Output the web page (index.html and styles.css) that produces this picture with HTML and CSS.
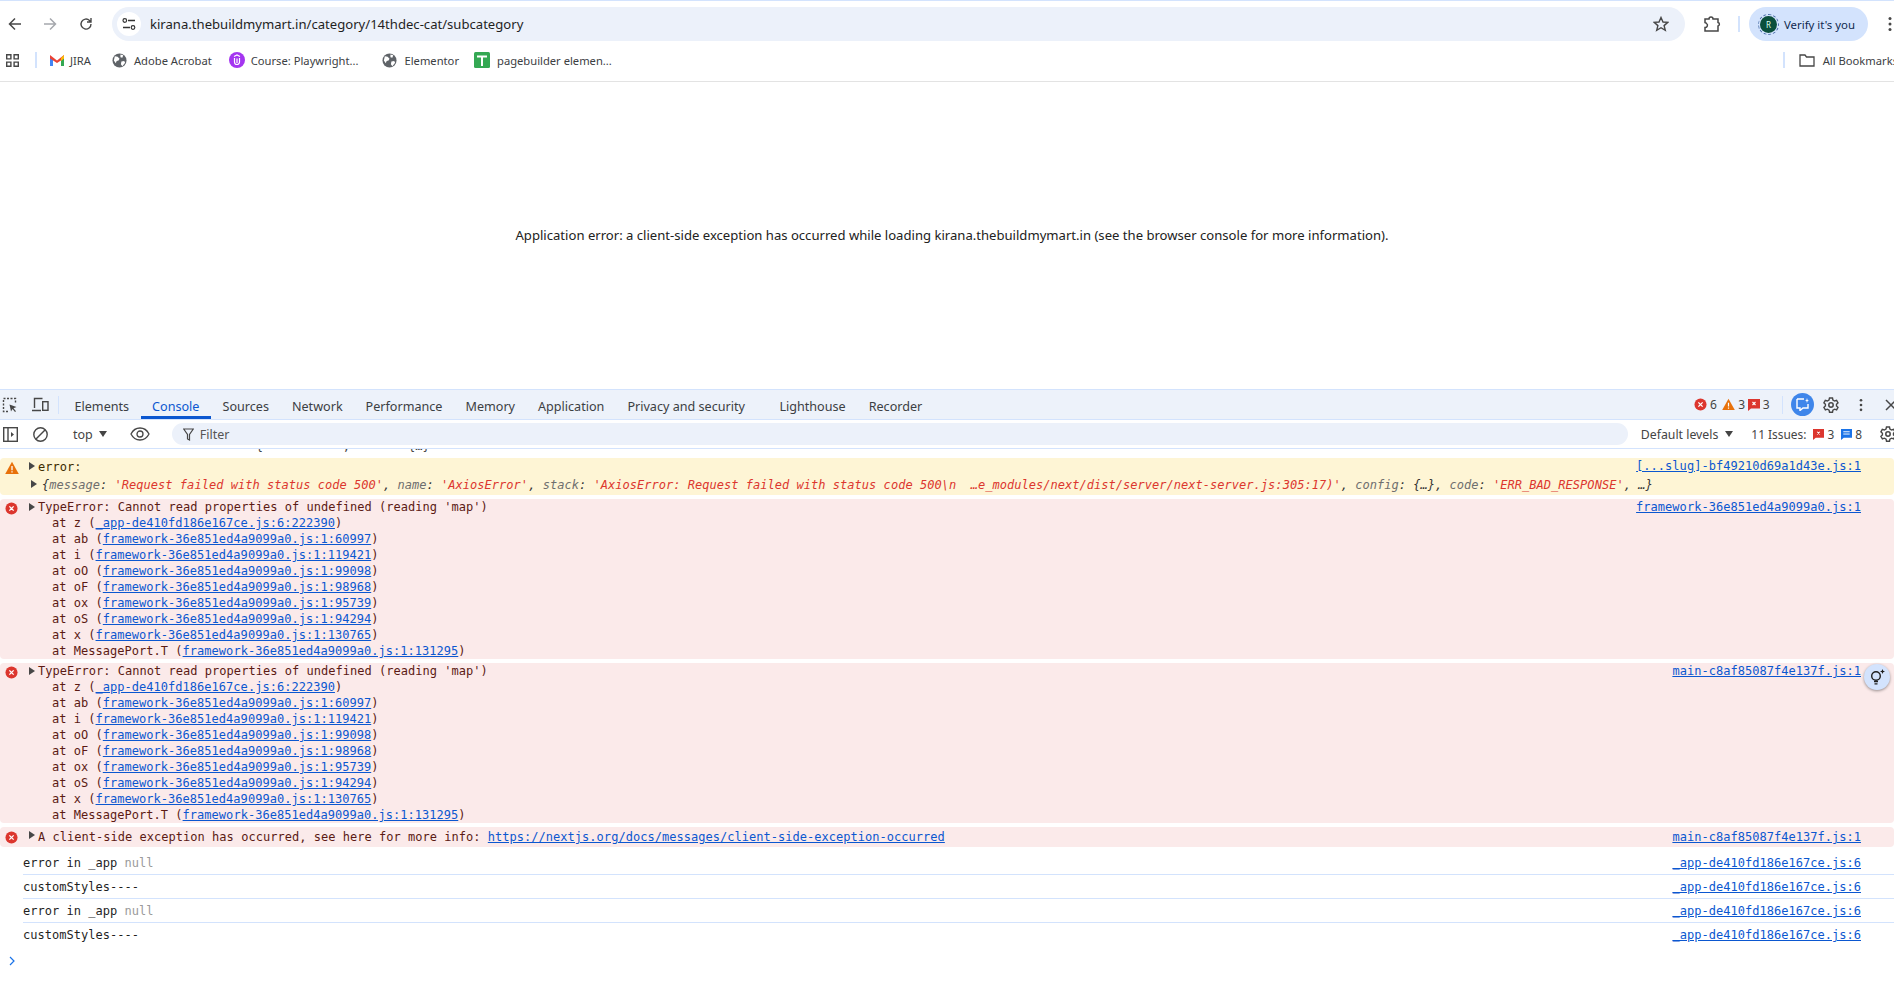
FILE: index.html
```html
<!DOCTYPE html>
<html lang="en">
<head>
    <meta charset="UTF-8">
    <meta name="viewport" content="width=device-width, initial-scale=1.0">
    <title>Application error</title>
    <link rel="stylesheet" href="styles.css">
</head>
<body>
    <svg class="defs" width="0" height="0">
        <symbol id="globe" viewBox="0 0 16 16">
            <circle cx="8" cy="8" r="7.5" fill="#5f6368"/>
            <path d="M3 3.5l3 .5 2 2-1 2-2 .5-1 2.5-2-3zM9 1.5l3 1-1 2.500-2-.5zM10 9l3-.5 1 2-3 3.500-1.500-2z" fill="#fff"/>
        </symbol>
        <symbol id="err" viewBox="0 0 14 14">
            <circle cx="7" cy="7" r="6.500" fill="#dc362e"/>
            <path d="M4.700 4.700l4.600 4.600M9.300 4.700l-4.600 4.600" stroke="#fff" stroke-width="1.400" fill="none"/>
        </symbol>
        <symbol id="warn" viewBox="0 0 14 14">
            <path d="M7 .8L13.800 13H.2z" fill="#e8710a"/>
            <path d="M7 5v4.200M7 10.200v1.300" stroke="#fff" stroke-width="1.300" fill="none"/>
        </symbol>
        <symbol id="issue" viewBox="0 0 12 12">
            <path d="M0 0h12v9.500H3L0 12z" fill="#dc362e"/>
            <path d="M4.500 3l3 3M7.500 3l-3 3" stroke="#fff" stroke-width="1.100" fill="none"/>
        </symbol>
        <symbol id="gear" viewBox="0 0 16 16">
            <circle cx="8" cy="8" r="2.200" fill="none" stroke="#474747" stroke-width="1.500"/>
            <path d="M6.500 1h3l.4 2 1.700 1 2-.7 1.400 2.600-1.500 1.300v1.800l1.500 1.300-1.400 2.600-2-.7-1.700 1-.4 2h-3l-.4-2-1.700-1-2 .7L.9 10.300l1.500-1.300V7.200L.9 5.900l1.400-2.600 2 .7 1.700-1z" fill="none" stroke="#474747" stroke-width="1.400"/>
        </symbol>
        <symbol id="kebab" viewBox="0 0 4 16">
            <circle cx="2" cy="2.500" r="1.500" fill="#474747"/>
            <circle cx="2" cy="8" r="1.500" fill="#474747"/>
            <circle cx="2" cy="13.500" r="1.500" fill="#474747"/>
        </symbol>
    </svg>

    <header class="browser">
        <div class="toolbar">
            <svg class="nav-icon" width="14" height="14" viewBox="0 0 14 14"><path d="M13 7H2M7 1.500L1.500 7 7 12.500" fill="none" stroke="#474747" stroke-width="1.500"/></svg>
            <svg class="nav-icon fwd" width="14" height="14" viewBox="0 0 14 14"><path d="M1 7h11M7 1.500L12.500 7 7 12.500" fill="none" stroke="#a5a8ad" stroke-width="1.500"/></svg>
            <svg class="nav-icon reload" width="14" height="14" viewBox="0 0 14 14"><path d="M12 7a5 5 0 1 1-1.500-3.500L12 5M12 1v4H8" fill="none" stroke="#474747" stroke-width="1.400"/></svg>
            <div class="omnibox">
                <span class="site-chip">
                    <svg width="14" height="14" viewBox="0 0 14 14"><path d="M6 3.500h7M1 10.500h7" stroke="#333" stroke-width="1.300"/><circle cx="2.800" cy="3.500" r="1.800" fill="none" stroke="#333" stroke-width="1.200"/><circle cx="11" cy="10.500" r="1.800" fill="none" stroke="#333" stroke-width="1.200"/></svg>
                </span>
                <span class="url">kirana.thebuildmymart.in/category/14thdec-cat/subcategory</span>
                <svg class="star" width="16" height="16" viewBox="0 0 16 16"><path d="M8 1.500l2 4.500 4.800.4-3.700 3.200 1.200 4.700L8 11.700l-4.300 2.600 1.200-4.700L1.200 6.400 6 6z" fill="none" stroke="#474747" stroke-width="1.400"/></svg>
            </div>
            <svg class="puzzle" width="18" height="16" viewBox="0 0 18 16"><path d="M2 3h4a2 2 0 0 1 4 0h5v3.500a1.800 1.800 0 0 1 0 3.500V15H2v-3.500a2.200 2.200 0 0 0 1.500-4A2.200 2.200 0 0 0 2 6.500z" fill="none" stroke="#474747" stroke-width="1.500"/></svg>
            <span class="tool-sep"></span>
            <div class="verify">
                <span class="avatar">R</span>
                <span>Verify it's you</span>
            </div>
            <svg class="menu-dots" width="4" height="16"><use href="#kebab"/></svg>
        </div>
        <div class="bookmarks">
            <svg class="apps" width="13" height="13" viewBox="0 0 13 13"><path d="M.7.7h4.200v4.200H.7zM8.100.7h4.200v4.200H8.100zM.7 8.100h4.200v4.200H.7zM8.100 8.100h4.200v4.200H8.100z" fill="none" stroke="#474747" stroke-width="1.400"/></svg>
            <span class="bm-sep"></span>
            <span class="bm jira">
                <svg width="14" height="11" viewBox="0 0 14 11"><path d="M0 2v9h3V5z" fill="#4285f4"/><path d="M14 2v9h-3V5z" fill="#34a853"/><path d="M0 0l7 5.500L14 0v3.500L7 8 0 3.500z" fill="#ea4335"/><path d="M11 3l3-3v3.500L11 6z" fill="#fbbc04"/></svg>
                JIRA
            </span>
            <span class="bm adobe"><svg width="15" height="15"><use href="#globe"/></svg>Adobe Acrobat</span>
            <span class="bm course">
                <svg width="16" height="16" viewBox="0 0 16 16"><circle cx="8" cy="8" r="8" fill="#a435f0"/><path d="M5.500 6v4a2.500 2.500 0 0 0 5 0V6M8 6.500V11M5 4.500l3-1.500 3 1.500" fill="none" stroke="#fff" stroke-width="1.200"/></svg>
                Course: Playwright...
            </span>
            <span class="bm elementor"><svg width="15" height="15"><use href="#globe"/></svg>Elementor</span>
            <span class="bm builder">
                <svg width="16" height="16" viewBox="0 0 16 16"><rect width="16" height="16" rx="1.500" fill="#34a853"/><path d="M3 4.500h10M8 4.500V14" stroke="#fff" stroke-width="2"/></svg>
                pagebuilder elemen...
            </span>
            <span class="bm-sep end"></span>
            <span class="bm all">
                <svg width="16" height="13" viewBox="0 0 16 13"><path d="M1 1h5l1.500 2H15v9H1z" fill="none" stroke="#474747" stroke-width="1.300"/></svg>
                All Bookmarks
            </span>
        </div>
    </header>

    <main class="page">
        <p>Application error: a client-side exception has occurred while loading kirana.thebuildmymart.in (see the browser console for more information).</p>
    </main>

    <section class="devtools">
        <div class="dt-tabs">
            <svg class="dt-inspect" width="16" height="16" viewBox="0 0 16 16"><path d="M6 14.500H1.500V1.500h12V6" fill="none" stroke="#474747" stroke-width="1.400" stroke-dasharray="2 1.500"/><path d="M7.500 7.500l7 2.500-3 1.200 2.500 3-1 .8-2.500-3-1.500 2.500z" fill="#474747"/></svg>
            <svg class="dt-device" width="18" height="15" viewBox="0 0 18 15"><path d="M3.500 11V1.500h8M1 13.500h9" fill="none" stroke="#474747" stroke-width="1.400"/><rect x="11.700" y="4.700" width="5.300" height="8.600" fill="none" stroke="#474747" stroke-width="1.400"/></svg>
            <span class="tab-sep"></span>
            <nav class="tab-list">
                <a class="tab">Elements</a>
                <a class="tab active">Console</a>
                <a class="tab">Sources</a>
                <a class="tab">Network</a>
                <a class="tab">Performance</a>
                <a class="tab">Memory</a>
                <a class="tab">Application</a>
                <a class="tab privacy">Privacy and security</a>
                <a class="tab">Lighthouse</a>
                <a class="tab">Recorder</a>
            </nav>
            <div class="dt-status">
                <span class="count"><svg width="13" height="13"><use href="#err"/></svg>6</span>
                <span class="count tight"><svg width="13" height="13"><use href="#warn"/></svg>3</span>
                <span class="count"><svg width="12" height="12"><use href="#issue"/></svg>3</span>
                <span class="tab-sep status-sep"></span>
                <span class="ai-btn">
                    <svg width="13" height="13" viewBox="0 0 13 13"><path d="M1 1h7M1 1v9h3v2.500L7 10h5V6" fill="none" stroke="#fff" stroke-width="1.400"/><path d="M11 0l.6 1.900L13 2.500l-1.400.6L11 5l-.6-1.900L9 2.500l1.400-.6z" fill="#fff"/></svg>
                </span>
                <svg class="dt-gear" width="16" height="16"><use href="#gear"/></svg>
                <svg class="dt-kebab" width="4" height="14"><use href="#kebab"/></svg>
                <svg class="dt-close" width="12" height="12" viewBox="0 0 12 12"><path d="M1 1l10 10M11 1L1 11" stroke="#474747" stroke-width="1.500"/></svg>
            </div>
        </div>

        <div class="dt-filter">
            <svg class="side-icon" width="15" height="15" viewBox="0 0 15 15"><rect x=".7" y=".7" width="13.600" height="13.600" fill="none" stroke="#474747" stroke-width="1.400"/><path d="M5 1v13" stroke="#474747" stroke-width="1.400"/><path d="M8 5l3 2.500L8 10z" fill="#474747"/></svg>
            <svg class="block-icon" width="15" height="15" viewBox="0 0 15 15"><circle cx="7.500" cy="7.500" r="6.700" fill="none" stroke="#474747" stroke-width="1.400"/><path d="M3 12l9-9" stroke="#474747" stroke-width="1.400"/></svg>
            <span class="tab-sep"></span>
            <span class="ctx">top<i class="caret"></i></span>
            <span class="tab-sep"></span>
            <svg class="eye-icon" width="20" height="14" viewBox="0 0 20 14"><path d="M1 7c2-4 5.500-6 9-6s7 2 9 6c-2 4-5.500 6-9 6s-7-2-9-6z" fill="none" stroke="#474747" stroke-width="1.300"/><circle cx="10" cy="7" r="3" fill="none" stroke="#474747" stroke-width="1.300"/></svg>
            <span class="tab-sep"></span>
            <div class="filter-box">
                <svg width="11" height="13" viewBox="0 0 11 13"><path d="M.7 1h9.600L6.500 6.500V12L4.500 11V6.500z" fill="none" stroke="#474747" stroke-width="1.200"/></svg>
                Filter
            </div>
            <span class="levels">Default levels<i class="caret"></i></span>
            <span class="tab-sep"></span>
            <span class="issues">11 Issues:
                <span class="count"><svg width="11" height="11"><use href="#issue"/></svg>3</span>
                <span class="count"><svg width="11" height="11" viewBox="0 0 12 12"><path d="M0 0h12v9.500H3L0 12z" fill="#1a73e8"/><path d="M2.500 3h7M2.500 5.500h7" stroke="#fff"/></svg>8</span>
            </span>
            <span class="tab-sep"></span>
            <svg class="filter-gear" width="16" height="16"><use href="#gear"/></svg>
        </div>

        <div class="console">
            <div class="cut-row"><pre>                              {           ,        {…}</pre></div>

            <div class="msg warn">
                <a class="src">[...slug]-bf49210d69a1d43e.js:1</a>
                <svg class="lvl" width="14" height="14"><use href="#warn"/></svg>
                <div class="line"><i class="tri"></i>error:</div>
                <div class="line obj"><i class="tri"></i><em>{<b>message</b>: <s>'Request failed with status code 500'</s>, <b>name</b>: <s>'AxiosError'</s>, <b>stack</b>: <s>'AxiosError: Request failed with status code 500\n  …e_modules/next/dist/server/next-server.js:305:17)'</s>, <b>config</b>: {…}, <b>code</b>: <s>'ERR_BAD_RESPONSE'</s>, …}</em></div>
            </div>

            <div class="msg error">
                <a class="src">framework-36e851ed4a9099a0.js:1</a>
                <svg class="lvl" width="13" height="13"><use href="#err"/></svg>
                <div class="line"><i class="tri"></i>TypeError: Cannot read properties of undefined (reading 'map')</div>
                <div class="stack">at z (<a>_app-de410fd186e167ce.js:6:222390</a>)</div>
                <div class="stack">at ab (<a>framework-36e851ed4a9099a0.js:1:60997</a>)</div>
                <div class="stack">at i (<a>framework-36e851ed4a9099a0.js:1:119421</a>)</div>
                <div class="stack">at oO (<a>framework-36e851ed4a9099a0.js:1:99098</a>)</div>
                <div class="stack">at oF (<a>framework-36e851ed4a9099a0.js:1:98968</a>)</div>
                <div class="stack">at ox (<a>framework-36e851ed4a9099a0.js:1:95739</a>)</div>
                <div class="stack">at oS (<a>framework-36e851ed4a9099a0.js:1:94294</a>)</div>
                <div class="stack">at x (<a>framework-36e851ed4a9099a0.js:1:130765</a>)</div>
                <div class="stack">at MessagePort.T (<a>framework-36e851ed4a9099a0.js:1:131295</a>)</div>
            </div>

            <div class="msg error">
                <a class="src">main-c8af85087f4e137f.js:1</a>
                <svg class="lvl" width="13" height="13"><use href="#err"/></svg>
                <div class="line"><i class="tri"></i>TypeError: Cannot read properties of undefined (reading 'map')</div>
                <div class="stack">at z (<a>_app-de410fd186e167ce.js:6:222390</a>)</div>
                <div class="stack">at ab (<a>framework-36e851ed4a9099a0.js:1:60997</a>)</div>
                <div class="stack">at i (<a>framework-36e851ed4a9099a0.js:1:119421</a>)</div>
                <div class="stack">at oO (<a>framework-36e851ed4a9099a0.js:1:99098</a>)</div>
                <div class="stack">at oF (<a>framework-36e851ed4a9099a0.js:1:98968</a>)</div>
                <div class="stack">at ox (<a>framework-36e851ed4a9099a0.js:1:95739</a>)</div>
                <div class="stack">at oS (<a>framework-36e851ed4a9099a0.js:1:94294</a>)</div>
                <div class="stack">at x (<a>framework-36e851ed4a9099a0.js:1:130765</a>)</div>
                <div class="stack">at MessagePort.T (<a>framework-36e851ed4a9099a0.js:1:131295</a>)</div>
                <span class="bulb">
                    <svg width="16" height="16" viewBox="0 0 16 16"><circle cx="7" cy="7" r="4.300" fill="none" stroke="#1f1f1f" stroke-width="1.400"/><path d="M5 12.500h4M5.500 14.800h3" stroke="#1f1f1f" stroke-width="1.300"/><path d="M13.500 0l.7 1.800 1.800.7-1.800.7-.7 1.800-.7-1.800-1.800-.7 1.800-.7z" fill="#1f1f1f"/></svg>
                </span>
            </div>

            <div class="msg error single">
                <a class="src">main-c8af85087f4e137f.js:1</a>
                <svg class="lvl" width="13" height="13"><use href="#err"/></svg>
                <div class="line"><i class="tri"></i>A client-side exception has occurred, see here for more info: <a>https://nextjs.org/docs/messages/client-side-exception-occurred</a></div>
            </div>

            <div class="log"><a class="src">_app-de410fd186e167ce.js:6</a>error in _app <span class="null">null</span></div>
            <div class="log"><a class="src">_app-de410fd186e167ce.js:6</a>customStyles----</div>
            <div class="log"><a class="src">_app-de410fd186e167ce.js:6</a>error in _app <span class="null">null</span></div>
            <div class="log last"><a class="src">_app-de410fd186e167ce.js:6</a>customStyles----</div>

            <div class="prompt">
                <svg width="6" height="10" viewBox="0 0 6 10"><path d="M1 1l4 4-4 4" fill="none" stroke="#1a73e8" stroke-width="1.200"/></svg>
            </div>
        </div>
    </section>
</body>
</html>
```

FILE: styles.css
```css
* {
    box-sizing: border-box;
}
html, body {
    height: 100%;
}
body {
    margin: 0;
    width: 1894px;
    height: 986px;
    overflow: hidden;
    background: #fff;
    font-family: "Noto Sans", "Open Sans", sans-serif;
    font-size: 12px;
    color: #1f1f1f;
}
.defs {
    position: absolute;
}
svg {
    display: block;
    flex-shrink: 0;
}

/* browser chrome */
.browser {
    height: 82px;
    border-top: 1px solid #d3e3fd;
    border-bottom: 1px solid #e3e3e3;
}
.toolbar {
    height: 46px;
    padding-top: 6px;
    display: flex;
    align-items: flex-start;
}
.nav-icon {
    margin: 10px 0 0 8px;
}
.nav-icon.fwd {
    margin-left: 21px;
}
.nav-icon.reload {
    margin-left: 22px;
}
.omnibox {
    width: 1573px;
    height: 34px;
    margin-left: 19px;
    padding: 0 16px 0 5px;
    border-radius: 17px;
    background: #ecf1fa;
    display: flex;
    align-items: center;
    font-size: 13.100px;
}
.site-chip {
    width: 24px;
    height: 24px;
    border-radius: 50%;
    background: #fff;
    display: flex;
    align-items: center;
    justify-content: center;
}
.url {
    margin-left: 9px;
    flex: 1;
}
.puzzle {
    margin: 9px 0 0 18px;
}
.tool-sep {
    width: 2px;
    height: 16px;
    margin: 9px 9px 0 17px;
    background: #d3e3fd;
}
.verify {
    width: 119px;
    height: 34px;
    padding-left: 11px;
    border-radius: 17px;
    background: #d3e3fd;
    display: flex;
    align-items: center;
    gap: 7px;
    font-size: 11.400px;
    color: #0f2a50;
}
.avatar {
    width: 17px;
    height: 17px;
    border-radius: 50%;
    background: #0b4f3c;
    color: #dfe;
    font-size: 8px;
    display: flex;
    align-items: center;
    justify-content: center;
    outline: 1px dashed #4a6ea8;
    outline-offset: 1px;
}
.menu-dots {
    margin: 9px 0 0 20px;
}
.bookmarks {
    height: 34px;
    padding: 0 0 8px 6px;
    display: flex;
    align-items: center;
    font-size: 11.200px;
    color: #3c4043;
    white-space: nowrap;
}
.apps {
    margin-right: 16px;
}
.bm-sep {
    width: 2px;
    height: 16px;
    background: #d3e3fd;
}
.bm {
    display: flex;
    align-items: center;
    gap: 7px;
}
.jira {
    margin-left: 13px;
    gap: 6px;
}
.adobe {
    margin-left: 21px;
}
.course {
    margin-left: 17px;
    gap: 6px;
}
.elementor {
    margin-left: 24px;
}
.builder {
    margin-left: 15px;
}
.bm-sep.end {
    margin-left: auto;
    margin-right: 14px;
}
.all {
    margin-right: -4px;
    gap: 8px;
}

/* page */
.page {
    height: 307px;
    display: flex;
    align-items: flex-start;
    justify-content: center;
    padding: 144px 0 0 10px;
    font-size: 13.100px;
}
.page p {
    margin: 0;
    color: #222;
}

/* devtools */
.devtools {
    position: relative;
}
.dt-tabs {
    height: 31px;
    padding-left: 2px;
    background: #edf2fa;
    border-top: 1px solid #d3e3fd;
    border-bottom: 1px solid #d3e3fd;
    display: flex;
    align-items: center;
}
.dt-device {
    margin-left: 13px;
}
.tab-sep {
    width: 1px;
    height: 18px;
    margin: 0 8px;
    background: #d3e3fd;
}
.dt-tabs > .tab-sep {
    margin: 0 4px 0 9px;
}
.tab-list {
    display: flex;
    height: 100%;
}
.tab {
    padding: 0 11.5px;
    display: flex;
    align-items: center;
    font-size: 12.600px;
    color: #3c4043;
    border-top: 6px solid transparent;
    border-bottom: 3px solid transparent;
}
.tab.active {
    color: #0b57d0;
    border-bottom-color: #0b57d0;
}
.tab.privacy {
    padding-right: 23px;
}
.dt-status {
    margin-left: auto;
    display: flex;
    align-items: center;
}
.count {
    display: inline-flex;
    align-items: center;
    gap: 3px;
    margin-right: 5.500px;
    color: #444;
}
.count.tight {
    margin-right: 2.500px;
}
.status-sep {
    margin: 0 8px 0 7px;
}
.ai-btn {
    width: 23px;
    height: 23px;
    border-radius: 50%;
    background: #3f86ea;
    display: flex;
    align-items: center;
    justify-content: center;
}
.dt-gear {
    margin-left: 9px;
}
.dt-kebab {
    margin-left: 20px;
}
.dt-close {
    margin: 0 -3px 0 22px;
}
.dt-filter {
    height: 29px;
    padding-left: 3px;
    border-bottom: 1px solid #d3e3fd;
    display: flex;
    align-items: center;
    color: #444;
    white-space: nowrap;
}
.block-icon {
    margin-left: 15px;
}
.dt-filter .tab-sep {
    margin: 0 12px;
}
.ctx {
    display: flex;
    align-items: center;
    gap: 6px;
    margin: 0 -1px 0 1px;
    font-size: 12.500px;
}
.caret {
    width: 0;
    height: 0;
    border-left: 4px solid transparent;
    border-right: 4px solid transparent;
    border-top: 6px solid #444;
}
.filter-box {
    flex-shrink: 0;
    width: 1456px;
    height: 22px;
    margin-left: -2px;
    padding-left: 11px;
    border-radius: 11px;
    background: #ecf1fa;
    display: flex;
    align-items: center;
    gap: 6px;
    font-size: 12.500px;
    color: #555;
}
.levels {
    flex-shrink: 0;
    margin-left: 13px;
    display: flex;
    align-items: center;
    gap: 7px;
    font-size: 12.300px;
}
.dt-filter .levels + .tab-sep {
    margin: 0 6px 0 12px;
}
.issues {
    flex-shrink: 0;
    display: flex;
    align-items: center;
    gap: 7px;
    font-size: 11.900px;
}
.issues .count {
    margin: 0;
    gap: 3px;
}
.dt-filter .issues + .tab-sep {
    margin: 0 9px;
}

/* console */
.console {
    font-family: "DejaVu Sans Mono", "Liberation Mono", monospace;
    font-size: 12px;
    letter-spacing: 0.03px;
}
.console a {
    color: #0b57d0;
    text-decoration: underline;
}
.cut-row {
    height: 9px;
    overflow: hidden;
}
.cut-row pre {
    margin: -11px 0 0 38px;
    font: inherit;
    line-height: 16px;
    color: #474747;
}
.msg {
    position: relative;
    margin-bottom: 4px;
    padding: 0 33px 0 38px;
    border-radius: 4px;
}
.msg.warn {
    height: 37px;
    background: #fef5d5;
    color: #3d2c00;
}
.msg.error {
    height: 160px;
    background: #fbeaea;
    color: #5c1a14;
}
.msg.error.single {
    height: 20px;
    line-height: 20px;
}
.src {
    float: right;
    line-height: 16px;
}
.single .src {
    line-height: 21px;
}
.lvl {
    position: absolute;
    left: 5px;
    top: 3px;
}
.single .lvl {
    top: 4px;
}
.line {
    position: relative;
    line-height: 16px;
}
.single .line {
    line-height: 21px;
}
.tri {
    position: absolute;
    left: -9px;
    top: 4px;
    border-top: 4px solid transparent;
    border-bottom: 4px solid transparent;
    border-left: 6px solid #474747;
}
.warn .line {
    line-height: 18px;
}
.warn .line:first-of-type {
    height: 18px;
}
.obj {
    margin-left: 4px;
    white-space: pre;
}
.obj .tri {
    left: -11px;
}
.obj em {
    font-style: italic;
    color: #333;
}
.obj b {
    font-weight: normal;
    color: #6e6e6e;
}
.obj s {
    text-decoration: none;
    color: #dc362e;
}
.stack {
    padding-left: 14px;
    line-height: 16px;
    white-space: pre;
}
.bulb {
    position: absolute;
    right: 4px;
    top: 1px;
    width: 26px;
    height: 26px;
    border-radius: 50%;
    background: #d3e3fd;
    box-shadow: 0 1px 3px rgba(0, 0, 0, .4);
    display: flex;
    align-items: center;
    justify-content: center;
}
.log {
    height: 24px;
    margin-left: 23px;
    padding-right: 33px;
    line-height: 24px;
    border-bottom: 1px solid #d3e3fd;
    color: #1f1f1f;
}
.log .src {
    line-height: 24px;
}
.log.last {
    border-bottom: 0;
}
.null {
    color: #9a9a9a;
}
.prompt {
    padding: 9px 0 0 9px;
}
```
